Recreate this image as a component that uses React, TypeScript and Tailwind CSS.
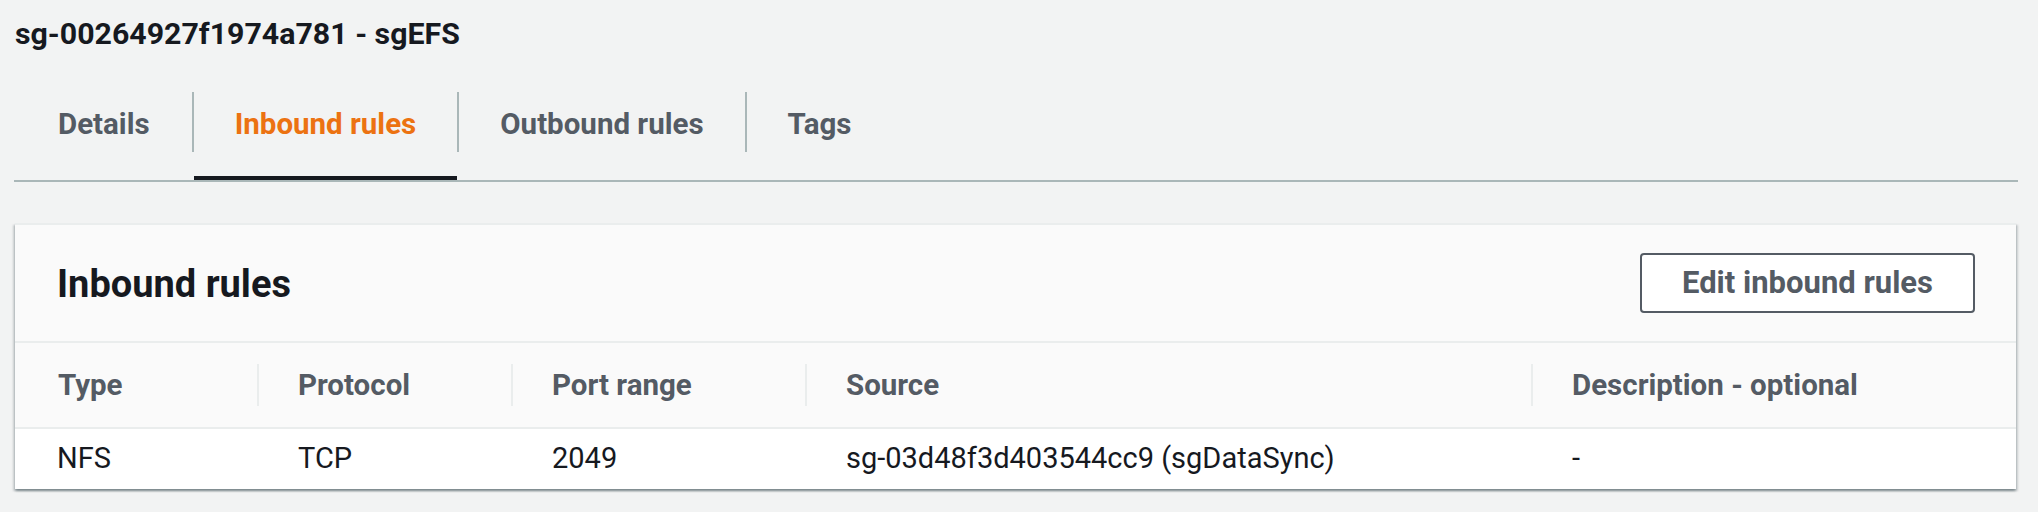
import React from "react";

type Rule = {
  type: string;
  protocol: string;
  port: string;
  source: string;
  description: string;
};

const tabs = ["Details", "Inbound rules", "Outbound rules", "Tags"];
const activeTab = "Inbound rules";

const columns = ["Type", "Protocol", "Port range", "Source", "Description - optional"];

const rules: Rule[] = [
  {
    type: "NFS",
    protocol: "TCP",
    port: "2049",
    source: "sg-03d48f3d403544cc9 (sgDataSync)",
    description: "-",
  },
];

export default function App() {
  return (
    <div className="min-h-screen bg-[#f2f3f3] pl-[14px] pr-[20px] font-['Roboto','Liberation_Sans',sans-serif]">
      {/* Title */}
      <div className="pt-[14px] pb-[10px]">
        <h2 className="h-[40px] pl-px text-[30.3px] font-bold leading-[40px] text-[#16191f]">
          sg-00264927f1974a781 - sgEFS
        </h2>
      </div>

      {/* Tabs */}
      <div className="flex border-b-2 border-[#aab7b8]">
        {tabs.map((tab, i) => {
          const active = tab === activeTab;
          return (
            <div key={tab} className="flex flex-col pt-[28px]">
              <div
                className={
                  i === 0
                    ? "flex h-[60px] items-center pt-[4px] pl-[44px] pr-[42px]"
                    : "flex h-[60px] items-center border-l-2 border-[#aab7b8] pt-[4px] px-[41px]"
                }
              >
                <span
                  className={
                    active
                      ? "text-[29.5px] font-bold text-[#ec7211]"
                      : "text-[29.5px] font-bold text-[#545b64]"
                  }
                >
                  {tab}
                </span>
              </div>
              <div
                className={
                  active
                    ? "mt-[24px] ml-[2px] h-[4px] bg-[#16191f]"
                    : "mt-[24px] h-[4px]"
                }
              />
            </div>
          );
        })}
      </div>

      {/* Inbound rules container */}
      <div className="mt-[41px] mr-[2px] ml-px border-t-2 border-[#eaeded] bg-white shadow-[0_2px_2px_0_rgba(0,28,36,0.3),2px_2px_2px_0_rgba(0,28,36,0.15),-2px_2px_2px_0_rgba(0,28,36,0.15)]">
        <div className="flex h-[118px] items-center justify-between border-b-2 border-[#eaeded] bg-[#fafafa] pl-[42px] pr-[41px]">
          <h2 className="pt-[2px] text-[38px] font-bold text-[#16191f]">Inbound rules</h2>
          <button className="flex h-[60px] items-center rounded-[4px] border-2 border-[#545b64] bg-white px-[40px] text-[31px] font-bold text-[#545b64]">
            Edit inbound rules
          </button>
        </div>

        <div className="grid grid-cols-[242px_254px_294px_726px_1fr]">
          {columns.map((col, i) => (
            <div
              key={col}
              className="flex h-[86px] items-center border-b-2 border-[#eaeded] bg-[#fafafa]"
            >
              {i === 0 ? (
                <span className="pl-[43px] text-[29.5px] font-bold text-[#545b64]">{col}</span>
              ) : (
                <>
                  <span className="h-[42px] w-[2px] bg-[#eaeded]" />
                  <span className="pl-[39px] text-[29.5px] font-bold text-[#545b64]">{col}</span>
                </>
              )}
            </div>
          ))}

          {rules.map((r) =>
            [r.type, r.protocol, r.port, r.source, r.description].map((v, i) => (
              <div key={r.source + i} className="flex h-[60px] items-center">
                <span
                  className={
                    i === 0
                      ? "pl-[42px] text-[29px] text-[#16191f]"
                      : "pl-[41px] text-[29px] text-[#16191f]"
                  }
                >
                  {v}
                </span>
              </div>
            ))
          )}
        </div>
      </div>
    </div>
  );
}
